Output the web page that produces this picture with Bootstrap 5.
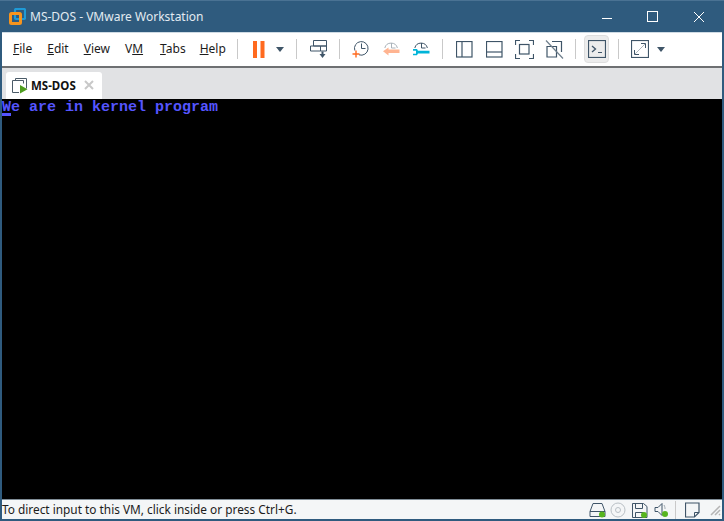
<!doctype html>
<html lang="en"><head><meta charset="utf-8"><title>MS-DOS - VMware Workstation</title>
<link href="https://cdn.jsdelivr.net/npm/bootstrap@5.3.0/dist/css/bootstrap.min.css" rel="stylesheet">
<style>
html,body{height:100%;margin:0;overflow:hidden}
body{background:#2f5b7e;font-family:"Noto Sans","Open Sans",sans-serif;font-size:12px;color:#1c1c1c}
.vm-win{width:724px;height:521px;padding:0 2px 2px 2px;border-top:1px solid #4a7293}
.vm-title{height:31px;color:#e3ebf1;font-size:12px;line-height:1}
.vm-logo{margin-left:7px;margin-right:4px}
.vm-winbtn{width:46px;height:31px}
.vm-tools{height:34px;background:#fff;border-top:1px solid #cfdbe4}
.vm-menu{width:229px;padding-left:11px;gap:15px;font-size:12px}
.vm-menu-tabs{margin-left:2px;margin-right:-1px}
.vm-slot{width:30px;height:30px;flex:none}
.vm-caret{width:12px;flex:none}
.vm-caret-gap{margin-right:4px}
.vm-sep{width:13px;flex:none}
.vm-sep::before{content:"";display:block;width:1px;height:20px;margin:0 auto;background:#c9c9c9}
.vm-term{background:#ececec;border:1px solid #dedede;border-radius:4px;height:28px;width:25px;margin:0 3px 0 2px}
.vm-strip{height:33px;background:#e1e2e4;border-top:2px solid #6e7072;padding:4px 0 0 4px}
.vm-tab{width:96px;height:27px;background:#fff;border-radius:3px 3px 0 0;padding-left:6px;font-weight:700;font-size:11.5px;color:#111}
.vm-tab svg{margin-right:3px}
.vm-x{margin-left:8px;margin-right:0}
.vm-screen{height:401px;background:#000;color:#5555ff;font-family:"Liberation Mono",monospace;font-weight:700;font-size:15px;line-height:16px;padding-top:1px}
.vm-cursor{width:9px;height:3px;background:#5555ff;margin-top:-3px}
.vm-status{height:20px;background:#f4f6f7;font-size:11.85px;border-top:1px solid #7f8c96;padding-top:1px}
.vm-status-icons svg{display:block}
.vm-stat-sep{width:1px;height:18px;background:#c9c9c9;margin:0 9px 0 5px}
.vm-gap3{margin-right:3px}
.vm-gap5{margin-right:5px}
</style></head>
<body>
<div class="vm-win d-flex flex-column">
  <div class="vm-title d-flex align-items-center">
    <svg class="vm-logo" width="17" height="17" viewBox="0 0 17 17" fill="none"><rect x="6" y="1" width="10" height="10" rx="1" stroke="#1f9ad6" stroke-width="2.200"/><rect x="1.500" y="5.500" width="10" height="10" rx="1" stroke="#f7941d" stroke-width="3"/></svg>
    <span class="flex-grow-1">MS-DOS - VMware Workstation</span>
    <div class="d-flex">
      <div class="vm-winbtn d-flex align-items-center justify-content-center"><svg width="12" height="12"><path d="M1 7.500h10" stroke="#fff"/></svg></div>
      <div class="vm-winbtn d-flex align-items-center justify-content-center"><svg width="12" height="12"><rect x=".5" y=".5" width="10" height="10" fill="none" stroke="#fff"/></svg></div>
      <div class="vm-winbtn d-flex align-items-center justify-content-center"><svg width="12" height="12"><path d="M1 1l10 10M11 1L1 11" stroke="#fff"/></svg></div>
    </div>
  </div>

  <div class="vm-tools d-flex align-items-center">
    <div class="vm-menu d-flex flex-none">
      <span><u>F</u>ile</span><span><u>E</u>dit</span><span><u>V</u>iew</span><span>V<u>M</u></span><span class="vm-menu-tabs"><u>T</u>abs</span><span><u>H</u>elp</span>
    </div>
    <div class="vm-sep"></div>
    <div class="vm-slot d-flex align-items-center justify-content-center"><svg width="14" height="17"><rect x="1" width="4" height="17" fill="#ff6a1f"/><rect x="8.500" width="4" height="17" fill="#ff6a1f"/></svg></div>
    <div class="vm-caret vm-caret-gap d-flex justify-content-center"><svg width="10" height="5"><path d="M1 0h8L5 5z" fill="#3f5568"/></svg></div>
    <div class="vm-sep"></div>
    <div class="vm-slot d-flex align-items-center justify-content-center"><svg width="18" height="19" viewBox="0 0 18 19" fill="none" stroke="#3f5568"><path d="M4.500.5h13v5.500h-13z"/><path d="M1.500 6h10v5h-10zM11.500 6h6v5h-6z"/><path d="M13.500 11.500v4" stroke-width="2"/><path d="M10.500 14h6l-3 4z" fill="#3f5568" stroke="none"/></svg></div>
    <div class="vm-sep"></div>
    <div class="vm-slot d-flex align-items-center justify-content-center"><svg width="18" height="18" viewBox="0 0 18 18" fill="none"><path d="M2.800 10.500A6.800 6.800 0 1 1 7 14.800" stroke="#3f5568"/><path d="M9.500 3.500v5h4" stroke="#3f5568"/><path d="M4 10.500v7M.5 14h7" stroke="#ff6a1f" stroke-width="1.400"/></svg></div>
    <div class="vm-slot d-flex align-items-center justify-content-center"><svg width="18" height="18" viewBox="0 0 18 18" fill="none"><path d="M2.800 8a6.500 6.500 0 0 1 12.600 0" stroke="#aab3ba"/><path d="M9.500 3v5h4" stroke="#aab3ba"/><path d="M5 9.500h12.500V13H5z" fill="#ffb491"/><path d="M1 11.200L6.500 7.500v8z" fill="#ffb491"/></svg></div>
    <div class="vm-slot d-flex align-items-center justify-content-center"><svg width="18" height="18" viewBox="0 0 18 18" fill="none"><path d="M2.800 8a6.500 6.500 0 0 1 12.600 0" stroke="#3f5568"/><path d="M9.500 3v5h4" stroke="#3f5568"/><path d="M1 9h4l1 1.800h11.500v2.700H6l-1 1.800H1v-1.500h3v-3H1z" fill="#00b4d8"/></svg></div>
    <div class="vm-sep"></div>
    <div class="vm-slot d-flex align-items-center justify-content-center"><svg width="17" height="17" fill="none" stroke="#3f5568" stroke-width="1.200"><rect x=".5" y=".5" width="15.500" height="15.500"/><path d="M6 .5v15.500"/></svg></div>
    <div class="vm-slot d-flex align-items-center justify-content-center"><svg width="17" height="17" fill="none" stroke="#3f5568" stroke-width="1.200"><rect x=".5" y=".5" width="15.500" height="15.500"/><path d="M.5 11h15.500"/></svg></div>
    <div class="vm-slot d-flex align-items-center justify-content-center"><svg width="19" height="19" fill="none" stroke="#3f5568" stroke-width="1.200"><rect x="4.500" y="4.500" width="9.500" height="9.500"/><path d="M5 .5H.5V5M14 .5h4.500V5M5 18.500H.5V14M14 18.500h4.500V14"/></svg></div>
    <div class="vm-slot d-flex align-items-center justify-content-center"><svg width="19" height="19" fill="none" stroke="#3f5568" stroke-width="1.200"><path d="M7 1.500h9.500V12M2 6.500h9.500V17H2z"/><path d="M1 .5l17 18" stroke="#6f7f8c"/></svg></div>
    <div class="vm-sep"></div>
    <div class="vm-term d-flex align-items-center justify-content-center flex-none"><svg width="18" height="18" fill="none" stroke="#3f5568"><rect x=".5" y=".5" width="17" height="17" stroke-width="1.200"/><path d="M4 6l3.500 3L4 12" stroke-width="1.300"/><path d="M10 12.500h4"/></svg></div>
    <div class="vm-sep"></div>
    <div class="vm-slot d-flex align-items-center justify-content-center"><svg width="18" height="18" fill="none" stroke="#3f5568"><rect x=".5" y=".5" width="17" height="17" stroke-width="1.200"/><path d="M4 14l10-10" stroke="#b0b8be"/><path d="M10 3.500h4.500V8M3.500 10v4.500H8"/></svg></div>
    <div class="vm-caret d-flex justify-content-center"><svg width="10" height="5"><path d="M1 0h8L5 5z" fill="#3f5568"/></svg></div>
  </div>

  <div class="vm-strip">
    <div class="vm-tab d-flex align-items-center">
      <svg width="16" height="17" viewBox="0 0 16 17" fill="none"><path d="M3.500 3.500v-2h11v10" stroke="#4b5b68"/><path d="M7 15.500H.5v-12h11v3" stroke="#4b5b68"/><path d="M8 8v8.500l7.500-4.200z" fill="#4f9d1f"/></svg>
      <span>MS-DOS</span>
      <svg class="vm-x" width="10" height="10"><path d="M1 1l8 8M9 1L1 9" stroke="#c8c8c8" stroke-width="2"/></svg>
    </div>
  </div>

  <div class="vm-screen">
    <div>We are in kernel program</div>
    <div class="vm-cursor"></div>
  </div>

  <div class="vm-status d-flex align-items-center">
    <span class="flex-grow-1">To direct input to this VM, click inside or press Ctrl+G.</span>
    <div class="vm-status-icons d-flex align-items-center">
      <svg class="vm-gap3" width="18" height="16" viewBox="0 0 18 16" fill="none"><path d="M4 1.500h9l3 8v5H1v-5z" stroke="#3f5568"/><path d="M1 9.500h15" stroke="#3f5568"/><circle cx="13" cy="12.500" r="3" fill="#58b51f"/></svg>
      <svg class="vm-gap5" width="16" height="16" fill="none" stroke="#b9c0c5"><circle cx="8" cy="8" r="7"/><circle cx="8" cy="8" r="2.500"/></svg>
      <svg class="vm-gap5" width="18" height="17" viewBox="0 0 18 17" fill="none"><path d="M1.500 1.500h11l3.500 3v11H1.500z" stroke="#3f5568"/><path d="M4.500 1.500v5h7v-5M4.500 15.500v-5h8v5" stroke="#3f5568"/><circle cx="13" cy="13" r="3" fill="#58b51f"/></svg>
      <svg width="16" height="16" viewBox="0 0 16 16" fill="none"><path d="M1 5.500h3l4-4v12l-4-4H1z" stroke="#3f5568"/><path d="M10 3c1 2 1 3 1 4" stroke="#9aa5ad"/><circle cx="11" cy="12" r="3" fill="#58b51f"/></svg>
      <div class="vm-stat-sep"></div>
      <svg width="15" height="16" fill="none" stroke="#3f5568"><path d="M.5 1h13.500v9.500L9.500 15H.5z" stroke-width="1.200"/><path d="M14 10.500H9.500V15"/></svg>
      <svg class="ms-2" width="14" height="14"><path d="M12 3L3 12M12 7l-5 5M12 11l-1 1" stroke="#b5b5b5" stroke-width="1.500"/></svg>
    </div>
  </div>
</div>
</body></html>
